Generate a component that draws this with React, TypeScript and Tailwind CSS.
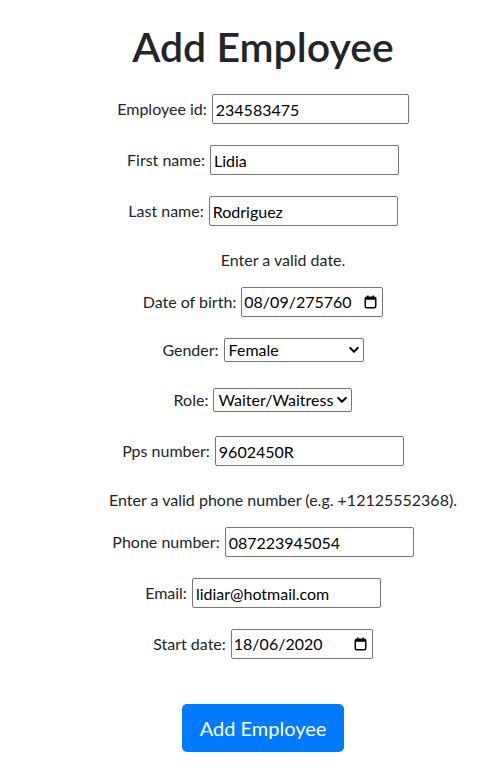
import React from "react";

/* ─── small drawn glyphs ─── */
function CalendarIcon() {
  return (
    <svg width="13" height="14" viewBox="0 0 13 14" className="shrink-0">
      <rect x="1.25" y="2.25" width="10.5" height="10.5" rx="1.5" fill="none" stroke="#000" strokeWidth="1.5" />
      <rect x="1.25" y="2.25" width="10.5" height="2.5" fill="#000" />
      <rect x="3" y="0.5" width="1.5" height="2.5" fill="#000" />
      <rect x="8.5" y="0.5" width="1.5" height="2.5" fill="#000" />
    </svg>
  );
}

function Chevron() {
  return (
    <svg width="10" height="7" viewBox="0 0 10 7" className="pointer-events-none absolute right-[5px] top-1/2 -translate-y-1/2">
      <path d="M1.2 1.4L5 5.2l3.8-3.8" fill="none" stroke="#000" strokeWidth="2" strokeLinecap="round" strokeLinejoin="round" />
    </svg>
  );
}

/* ─── form pieces ─── */
function Row({ label, className, children }: { label: string; className: string; children: React.ReactNode }) {
  return (
    <div className={`flex h-[30px] items-center justify-center ${className}`}>
      <label className="mr-[5px] whitespace-nowrap">{label}</label>
      {children}
    </div>
  );
}

function TextInput({ value, width }: { value: string; width: string }) {
  return (
    <input
      type="text"
      defaultValue={value}
      className={`h-[30px] rounded-[2px] border border-[#767676] bg-white px-[3px] text-black outline-none ${width}`}
    />
  );
}

function DateInput({ value }: { value: string }) {
  return (
    <div className="flex h-[30px] w-[142px] items-center rounded-[2px] border border-[#767676] bg-white pl-[2px] pr-[5px]">
      <input type="text" defaultValue={value} className="w-full min-w-0 text-black outline-none" />
      <CalendarIcon />
    </div>
  );
}

function Select({ value, options, width }: { value: string; options: string[]; width: string }) {
  return (
    <div className={`relative ${width}`}>
      <select
        defaultValue={value}
        className="h-[24px] w-full appearance-none rounded-[2px] border border-[#767676] bg-white pl-[4px] pr-[14px] leading-[22px] text-black outline-none"
      >
        {options.map((o) => (
          <option key={o}>{o}</option>
        ))}
      </select>
      <Chevron />
    </div>
  );
}

export default function App() {
  return (
    <div className="min-h-screen bg-white pl-6 font-['Lato','Noto_Sans',sans-serif] text-[16px] leading-6 text-[#212529]">
      <h1 className="pt-[23px] text-center text-[41px] font-semibold leading-[48px]">Add Employee</h1>

      <Row label="Employee id:" className="mt-[23px]">
        <TextInput value="234583475" width="w-[197px]" />
      </Row>
      <Row label="First name:" className="mt-[21px]">
        <TextInput value="Lidia" width="w-[189px]" />
      </Row>
      <Row label="Last name:" className="mt-[21px]">
        <TextInput value="Rodriguez" width="w-[189px]" />
      </Row>

      <div className="mt-[19px] flex h-[30px] items-center justify-center pl-[40px]">Enter a valid date.</div>

      <Row label="Date of birth:" className="mt-[12px]">
        <DateInput value="08/09/275760" />
      </Row>
      <Row label="Gender:" className="mt-[18px]">
        <Select value="Female" options={["Male", "Female", "Prefer not to say"]} width="w-[140px]" />
      </Row>
      <Row label="Role:" className="mt-[20px]">
        <Select value="Waiter/Waitress" options={["Manager", "Chef", "Waiter/Waitress"]} width="w-[139px]" />
      </Row>
      <Row label="Pps number:" className="mt-[21px]">
        <TextInput value="9602450R" width="w-[189px]" />
      </Row>

      <div className="mt-[19px] flex h-[30px] items-center justify-center pl-[40px]">
        Enter a valid phone number (e.g. +12125552368).
      </div>

      <Row label="Phone number:" className="mt-[12px]">
        <TextInput value="087223945054" width="w-[189px]" />
      </Row>
      <Row label="Email:" className="mt-[21px]">
        <TextInput value="lidiar@hotmail.com" width="w-[189px]" />
      </Row>
      <Row label="Start date:" className="mt-[21px]">
        <DateInput value="18/06/2020" />
      </Row>

      <div className="mt-[45px] flex justify-center">
        <button
          type="button"
          className="h-[48px] w-[162px] rounded-[5px] bg-[#007bff] text-[20px] text-white"
        >
          Add Employee
        </button>
      </div>
    </div>
  );
}
